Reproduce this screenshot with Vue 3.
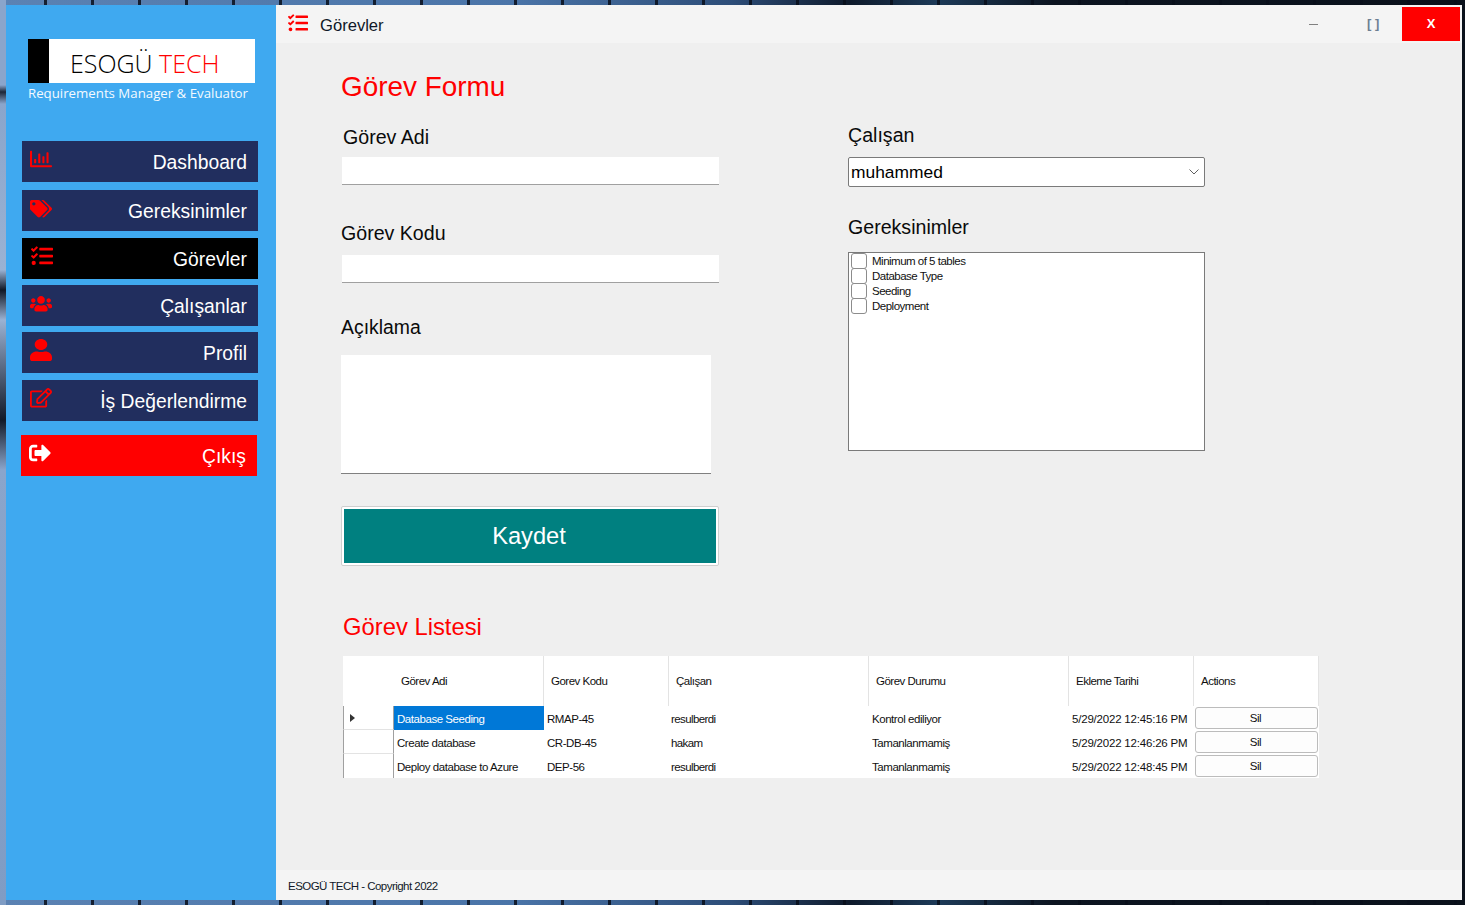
<template>
  <div class="desktop">
    <div class="window">
      <aside class="sidebar">
        <div class="logo">
          <div class="logo-mark"></div>
          <div class="logo-text">ESOGÜ <span class="red">TECH</span></div>
        </div>
        <div class="logo-sub">Requirements Manager &amp; Evaluator</div>
        <nav class="nav">
          <a v-for="item in menu" :key="item.label" :class="['nav-item', { active: item.active }]">
            <svg :class="['nav-icon', item.cls]" :viewBox="item.box" preserveAspectRatio="none" fill="#f00" aria-hidden="true"><path :d="item.d" /></svg>
            <span>{{ item.label }}</span>
          </a>
        </nav>
        <a class="nav-item logout">
          <svg class="nav-icon" viewBox="0 0 512 512" fill="#fff" aria-hidden="true"><path :d="icons.signOut" /></svg>
          <span>Çıkış</span>
        </a>
      </aside>

      <main class="main">
        <header class="titlebar">
          <svg class="title-icon" viewBox="0 0 512 512" fill="#f00" aria-hidden="true"><path :d="icons.tasks" /></svg>
          <span class="title-text">Görevler</span>
          <span class="win-min"></span>
          <span class="win-max">[ ]</span>
          <span class="win-close">X</span>
        </header>

        <section class="content">
          <h1 class="form-title">Görev Formu</h1>
          <div class="form-cols">
            <div class="col-left">
              <label class="lbl lbl-adi">Görev Adi</label>
              <input class="field field-adi" type="text" />
              <label class="lbl lbl-kodu">Görev Kodu</label>
              <input class="field field-kodu" type="text" />
              <label class="lbl lbl-aciklama">Açıklama</label>
              <textarea class="area"></textarea>
              <div class="save-wrap"><button class="save" type="button">Kaydet</button></div>
            </div>
            <div class="col-right">
              <label class="lbl lbl-calisan">Çalışan</label>
              <div class="combo">
                <span>muhammed</span>
                <svg class="chevron" viewBox="0 0 10 6" aria-hidden="true"><path d="M0.5 0.5 L5 5 L9.500 0.500" fill="none" stroke="#606060" /></svg>
              </div>
              <label class="lbl lbl-ger">Gereksinimler</label>
              <div class="checklist">
                <div v-for="req in requirements" :key="req" class="check-row">
                  <span class="box"></span>
                  <span>{{ req }}</span>
                </div>
              </div>
            </div>
          </div>

          <h2 class="list-title">Görev Listesi</h2>
          <table class="grid">
            <colgroup>
              <col v-for="(w, i) in colWidths" :key="i" :class="`col-${w}`" />
            </colgroup>
            <thead>
              <tr>
                <th class="corner"></th>
                <th v-for="h in headers" :key="h">{{ h }}</th>
              </tr>
            </thead>
            <tbody>
              <tr v-for="(row, index) in rows" :key="row.code">
                <td class="row-head">
                  <span v-if="index === 0" class="arrow"></span>
                </td>
                <td :class="{ selected: index === 0 }">{{ row.name }}</td>
                <td>{{ row.code }}</td>
                <td class="worker">{{ row.worker }}</td>
                <td>{{ row.status }}</td>
                <td class="date">{{ row.date }}</td>
                <td class="action"><button class="del" type="button">Sil</button></td>
              </tr>
            </tbody>
          </table>
        </section>

        <footer class="footer">ESOGÜ TECH - Copyright 2022</footer>
      </main>
    </div>
  </div>
</template>

<script setup>
const icons = {
  chart: 'M396.800 352h22.400c6.400 0 12.800-6.400 12.800-12.800V108.800c0-6.400-6.400-12.800-12.800-12.800h-22.400c-6.400 0-12.800 6.400-12.800 12.800v230.400c0 6.400 6.400 12.800 12.800 12.800zm-192 0h22.400c6.400 0 12.800-6.400 12.800-12.800V140.800c0-6.400-6.400-12.800-12.800-12.800h-22.400c-6.400 0-12.800 6.400-12.800 12.800v198.400c0 6.400 6.400 12.800 12.800 12.800zm96 0h22.400c6.400 0 12.800-6.400 12.800-12.800V204.800c0-6.400-6.400-12.800-12.800-12.800h-22.400c-6.400 0-12.800 6.400-12.800 12.800v134.400c0 6.400 6.400 12.800 12.800 12.800zM496 400H48V80c0-8.840-7.160-16-16-16H16C7.160 64 0 71.160 0 80v336c0 17.670 14.330 32 32 32h464c8.840 0 16-7.160 16-16v-16c0-8.840-7.160-16-16-16zm-387.200-48h22.400c6.400 0 12.800-6.400 12.800-12.800v-70.400c0-6.400-6.400-12.800-12.800-12.800h-22.400c-6.400 0-12.800 6.400-12.800 12.800v70.400c0 6.400 6.400 12.800 12.800 12.800z',
  tags: 'M497.941 225.941L286.059 14.059A48 48 0 0 0 252.118 0H48C21.490 0 0 21.490 0 48v204.118a48 48 0 0 0 14.059 33.941l211.882 211.882c18.744 18.745 49.136 18.746 67.882 0l204.118-204.118c18.745-18.745 18.745-49.137 0-67.882zM112 160c-26.510 0-48-21.490-48-48s21.490-48 48-48 48 21.490 48 48-21.490 48-48 48zm513.941 133.823L421.823 497.941c-18.745 18.745-49.137 18.745-67.882 0l-.36-.36L527.640 323.522c16.999-16.999 26.360-39.600 26.360-63.640s-9.362-46.641-26.360-63.640L331.397 0h48.721a48 48 0 0 1 33.941 14.059l211.882 211.882c18.745 18.745 18.745 49.137 0 67.882z',
  tasks: 'M139.610 35.500a12 12 0 0 0-17 0L58.930 98.810l-22.700-22.120a12 12 0 0 0-17 0L3.530 92.410a12 12 0 0 0 0 17l47.590 47.400a12.780 12.780 0 0 0 17.610 0l15.590-15.620L156.520 69a12.090 12.090 0 0 0 .09-17zm0 159.190a12 12 0 0 0-17 0l-63.680 63.720-22.700-22.100a12 12 0 0 0-17 0L3.530 252a12 12 0 0 0 0 17L51 316.500a12.770 12.770 0 0 0 17.600 0l15.700-15.690 72.200-72.220a12 12 0 0 0 .09-16.900zM64 368c-26.490 0-48.590 21.500-48.590 48S37.530 464 64 464a48 48 0 0 0 0-96zm432 16H208a16 16 0 0 0-16 16v32a16 16 0 0 0 16 16h288a16 16 0 0 0 16-16v-32a16 16 0 0 0-16-16zm0-320H208a16 16 0 0 0-16 16v32a16 16 0 0 0 16 16h288a16 16 0 0 0 16-16V80a16 16 0 0 0-16-16zm0 160H208a16 16 0 0 0-16 16v32a16 16 0 0 0 16 16h288a16 16 0 0 0 16-16v-32a16 16 0 0 0-16-16z',
  users: 'M96 224c35.300 0 64-28.700 64-64s-28.700-64-64-64-64 28.700-64 64 28.700 64 64 64zm448 0c35.300 0 64-28.700 64-64s-28.700-64-64-64-64 28.700-64 64 28.700 64 64 64zm32 32h-64c-17.600 0-33.500 7.100-45.100 18.600 40.300 22.100 68.900 62 75.100 109.400h66c17.700 0 32-14.300 32-32v-32c0-35.300-28.700-64-64-64zm-256 0c61.900 0 112-50.100 112-112S381.900 32 320 32 208 82.100 208 144s50.100 112 112 112zm76.800 32h-8.300c-20.800 10-43.900 16-68.500 16s-47.600-6-68.500-16h-8.300C179.600 288 128 339.600 128 403.200V432c0 26.500 21.500 48 48 48h288c26.500 0 48-21.500 48-48v-28.800c0-63.600-51.600-115.200-115.200-115.200zm-223.700-13.400C161.500 263.100 145.600 256 128 256H64c-35.300 0-64 28.700-64 64v32c0 17.700 14.300 32 32 32h65.900c6.300-47.400 34.900-87.300 75.200-109.400z',
  user: 'M224 256c70.700 0 128-57.300 128-128S294.700 0 224 0 96 57.300 96 128s57.300 128 128 128zm89.600 32h-16.700c-22.200 10.200-46.900 16-72.900 16s-50.600-5.800-72.900-16h-16.700C60.200 288 0 348.200 0 422.400V464c0 26.500 21.500 48 48 48h352c26.500 0 48-21.500 48-48v-41.600c0-74.200-60.200-134.400-134.400-134.400z',
  edit: 'M402.300 344.900l32-32c5-5 13.700-1.500 13.700 5.700V464c0 26.500-21.500 48-48 48H48c-26.500 0-48-21.500-48-48V112c0-26.500 21.500-48 48-48h273.500c7.100 0 10.700 8.600 5.700 13.700l-32 32c-1.500 1.500-3.500 2.300-5.700 2.300H48v352h352V350.500c0-2.100.8-4.100 2.300-5.600zm156.600-201.800L296.300 405.700l-90.400 10c-26.200 2.900-48.500-19.200-45.600-45.600l10-90.400L432.900 17.100c22.900-22.900 59.900-22.900 82.700 0l43.200 43.200c22.900 22.900 22.900 60 .1 82.800zM460.100 174L402 115.900 216.200 301.800l-7.300 65.300 65.300-7.300L460.100 174zm64.800-79.700l-43.200-43.200c-4.100-4.100-10.800-4.100-14.800 0L436 82l58.100 58.100 30.900-30.900c4-4.200 4-10.800-.1-14.900z',
  signOut: 'M497 273L329 441c-15 15-41 4.500-41-17v-96H152c-13.300 0-24-10.700-24-24v-96c0-13.300 10.700-24 24-24h136V88c0-21.400 25.900-32 41-17l168 168c9.300 9.400 9.300 24.600 0 34zM192 436v-40c0-6.600-5.400-12-12-12H96c-17.700 0-32-14.300-32-32V160c0-17.700 14.300-32 32-32h84c6.600 0 12-5.400 12-12V76c0-6.600-5.400-12-12-12H96c-53 0-96 43-96 96v192c0 53 43 96 96 96h84c6.600 0 12-5.400 12-12z'
}

const menu = [
  { label: 'Dashboard', d: icons.chart, box: '0 0 512 512', cls: 'ic-chart' },
  { label: 'Gereksinimler', d: icons.tags, box: '0 0 640 512', cls: 'ic-wide' },
  { label: 'Görevler', d: icons.tasks, box: '0 0 512 512', cls: 'ic-tasks', active: true },
  { label: 'Çalışanlar', d: icons.users, box: '0 0 640 512', cls: 'ic-wide' },
  { label: 'Profil', d: icons.user, box: '0 0 448 512', cls: 'ic-user' },
  { label: 'İş Değerlendirme', d: icons.edit, box: '0 0 576 512', cls: 'ic-edit' }
]

const requirements = ['Minimum of 5 tables', 'Database Type', 'Seeding', 'Deployment']

const colWidths = [51, 150, 125, 200, 200, 125, 125]
const headers = ['Görev Adi', 'Gorev Kodu', 'Çalışan', 'Görev Durumu', 'Ekleme Tarihi', 'Actions']

const rows = [
  { name: 'Database Seeding', code: 'RMAP-45', worker: 'resulberdi', status: 'Kontrol ediliyor', date: '5/29/2022 12:45:16 PM' },
  { name: 'Create database', code: 'CR-DB-45', worker: 'hakam', status: 'Tamanlanmamiş', date: '5/29/2022 12:46:26 PM' },
  { name: 'Deploy database to Azure', code: 'DEP-56', worker: 'resulberdi', status: 'Tamanlanmamiş', date: '5/29/2022 12:48:45 PM' }
]
</script>

<style>
html, body {
  margin: 0;
  background: #0b1420;
}
</style>

<style scoped>
.desktop {
  width: 1465px;
  height: 905px;
  box-sizing: border-box;
  padding: 5px 3px 5px 6px;
  overflow: hidden;
  font-family: "Liberation Sans", Arial, sans-serif;
  color: #000;
  /* wallpaper that shows round the window: left strip, ticks, then the horizontal colour run */
  background:
    linear-gradient(180deg, #8aa5cb 0, #8aa5cb 85px, #1c2638 92px, #8aa5cb 104px, #9ab2d3 270px, #101826 290px, #9ab2d3 320px, #121a28 420px, #8aa5cb 470px, #7f9cc4 100%) 0 0 / 6px 100% no-repeat,
    repeating-linear-gradient(90deg, rgba(8, 14, 26, 0) 0, rgba(8, 14, 26, 0) 44px, rgba(8, 14, 26, 0.85) 44px, rgba(8, 14, 26, 0.85) 47px),
    linear-gradient(90deg, #5b82b3 0, #4a74a8 35%, #2d4d78 50%, #0e1a2b 58%, #1d3a58 64%, #0c1420 72%, #0a111b 100%);
}
.window {
  display: flex;
  height: 100%;
}

/* sidebar */
.sidebar {
  width: 270px;
  flex: none;
  box-sizing: border-box;
  padding: 34px 0 0 16px;
  background: #3fa9f0;
}
.logo {
  display: flex;
  width: 227px;
  height: 44px;
  margin-left: 6px;
  background: #fff;
}
.logo-mark {
  width: 21px;
  background: #000;
}
.logo-text {
  margin-left: 21px;
  font-family: "Open Sans", sans-serif;
  font-size: 25px;
  font-weight: 300;
  line-height: 48px;
  color: #000;
}
.red {
  color: #f00;
}
.logo-sub {
  margin: 2px 0 0 6px;
  font-family: "Open Sans", sans-serif;
  font-size: 13.250px;
  line-height: 16px;
  color: #f4faff;
  white-space: nowrap;
}
.nav {
  display: flex;
  flex-direction: column;
  margin-top: 40px;
}
.nav-item {
  display: flex;
  justify-content: space-between;
  box-sizing: border-box;
  width: 236px;
  height: 41px;
  padding: 0 11px 0 8px;
  background: #212e5e;
  color: #fff;
  font-size: 19.300px;
  line-height: 43px;
}
.nav .nav-item:nth-child(2) { margin-top: 8px; }
.nav .nav-item:nth-child(3) { margin-top: 7px; }
.nav .nav-item:nth-child(4) { margin-top: 6px; }
.nav .nav-item:nth-child(5) { margin-top: 6px; }
.nav .nav-item:nth-child(6) { margin-top: 7px; }
.nav-item.active {
  background: #000;
}
.nav-icon {
  width: 22px;
  height: 22px;
  flex: none;
  margin-top: 7px;
}
.ic-wide {
  height: 17.600px;
  margin-top: 10px;
}
.ic-edit {
  height: 19.600px;
  margin-top: 8px;
}
.ic-tasks {
  margin-left: 1px;
}
.logout {
  margin: 14px 0 0 -1px;
  background: #f00;
  padding-right: 11px;
  line-height: 43px;
}

/* right side */
.main {
  flex: 1;
  display: flex;
  flex-direction: column;
  min-width: 0;
  background: #efefef;
}
.titlebar {
  display: flex;
  flex: none;
  height: 38px;
  box-sizing: border-box;
  padding: 2px 2px 0 12px;
  background: #f4f4f4;
}
.title-icon {
  width: 20px;
  height: 20px;
  margin-top: 6px;
  flex: none;
}
.title-text {
  flex: 1;
  margin-left: 12px;
  font-size: 16.600px;
  line-height: 38px;
  color: #101828;
}
.win-min {
  width: 9px;
  height: 1px;
  margin: 17px 49px 0 0;
  background: #808080;
}
.win-max {
  width: 12px;
  margin-right: 23px;
  font-size: 13px;
  font-weight: 700;
  line-height: 34px;
  color: #6d7f93;
  white-space: nowrap;
}
.win-close {
  width: 58px;
  height: 34px;
  background: #f00;
  color: #fff;
  font-size: 13px;
  font-weight: 700;
  line-height: 34px;
  text-align: center;
}
.content {
  flex: 1;
  padding-left: 65px;
}
.form-title {
  margin: 27px 0 0;
  font-size: 27.900px;
  font-weight: 400;
  line-height: 34px;
  color: #f00;
}
.form-cols {
  display: flex;
}
.col-left {
  width: 507px;
  flex: none;
}
.col-right {
  flex: 1;
}
.lbl {
  display: block;
  font-size: 19.600px;
  line-height: 24px;
  color: #0a0a0a;
}
.lbl-adi { margin: 21px 0 8px 2px; }
.lbl-kodu { margin: 36px 0 10px; }
.lbl-aciklama { margin: 32px 0 16px; font-size: 19.400px; }
.lbl-calisan { margin: 19px 0 10px; }
.lbl-ger { margin: 28px 0 13px; }
.field {
  display: block;
  box-sizing: border-box;
  width: 377px;
  height: 28px;
  margin: 0 0 0 1px;
  padding: 0;
  border: 0;
  border-bottom: 1px solid #a0a0a0;
  background: #fff;
  outline: none;
}
.area {
  display: block;
  box-sizing: border-box;
  width: 370px;
  height: 119px;
  margin: 0;
  padding: 0;
  border: 0;
  border-bottom: 1px solid #808080;
  background: #fff;
  outline: none;
  resize: none;
}
.save-wrap {
  box-sizing: border-box;
  width: 378px;
  height: 60px;
  margin-top: 32px;
  padding: 2px;
  border: 1px solid #cfcfcf;
  border-radius: 2px;
  background: #fff;
}
.save {
  display: block;
  width: 100%;
  height: 100%;
  padding: 0 2px 0 0;
  border: 0;
  background: #008080;
  color: #fff;
  font-family: inherit;
  font-size: 23.700px;
}
.combo {
  display: flex;
  align-items: center;
  justify-content: space-between;
  box-sizing: border-box;
  width: 357px;
  height: 30px;
  padding: 0 5px 0 2px;
  border: 1px solid #7a7a7a;
  border-radius: 2px;
  background: #fff;
  font-size: 17.400px;
}
.chevron {
  width: 10px;
  height: 6px;
}
.checklist {
  box-sizing: border-box;
  width: 357px;
  height: 199px;
  border: 1px solid #7a7a7a;
  background: #fff;
}
.check-row {
  display: flex;
  align-items: center;
  height: 15px;
  padding-left: 2px;
  font-size: 11.500px;
  letter-spacing: -0.500px;
  color: #101010;
}
.box {
  box-sizing: border-box;
  width: 16px;
  height: 16px;
  margin-right: 5px;
  border: 1px solid #8c8c8c;
  border-radius: 3px;
  background: #fff;
  flex: none;
}
.list-title {
  margin: 46px 0 14px 2px;
  font-size: 23.800px;
  font-weight: 400;
  line-height: 30px;
  color: #f00;
}

/* table */
.grid {
  width: 976px;
  margin-left: 2px;
  table-layout: fixed;
  border-collapse: separate;
  border-spacing: 0;
  background: #fff;
  font-size: 11.500px;
  letter-spacing: -0.450px;
  color: #101010;
}
.col-51 { width: 51px; }
.col-125 { width: 125px; }
.col-150 { width: 150px; }
.col-200 { width: 200px; }
.grid th {
  height: 50px;
  box-sizing: border-box;
  padding: 0 0 0 7px;
  border-right: 1px solid #e3e3e3;
  font-weight: 400;
  letter-spacing: -0.500px;
  text-align: left;
  vertical-align: middle;
}
.grid th.corner {
  border-right: 0;
}
.grid td {
  height: 24px;
  box-sizing: border-box;
  padding: 1px 0 0 3px;
  vertical-align: middle;
  white-space: nowrap;
  overflow: hidden;
}
.grid td.row-head {
  padding: 0;
  border-left: 1px solid #a0a0a0;
  border-right: 1px solid #a0a0a0;
  border-bottom: 1px solid #e3e3e3;
}
.grid tr:last-child td.row-head {
  border-bottom: 0;
}
.arrow {
  display: block;
  width: 0;
  height: 0;
  margin-left: 6px;
  border-left: 5px solid #333;
  border-top: 4.500px solid transparent;
  border-bottom: 4.500px solid transparent;
}
.grid td.selected {
  background: #0078d7;
  color: #fff;
}
.grid td.worker {
  padding-left: 2px;
  letter-spacing: -0.600px;
}
.grid td.date {
  letter-spacing: -0.200px;
}
.grid td.action {
  padding: 0 0 0 1px;
  vertical-align: top;
}
.del {
  display: block;
  box-sizing: border-box;
  width: 123px;
  height: 22px;
  margin-top: 1px;
  padding: 0 2px 0 0;
  border: 1px solid #bcbcbc;
  border-radius: 3px;
  background: #fdfdfd;
  color: #101010;
  font-family: inherit;
  font-size: 11.500px;
  letter-spacing: -0.450px;
}
.footer {
  flex: none;
  height: 30px;
  box-sizing: border-box;
  padding-left: 12px;
  background: #f4f4f4;
  font-size: 11.500px;
  letter-spacing: -0.530px;
  line-height: 32px;
  color: #101828;
}
</style>
